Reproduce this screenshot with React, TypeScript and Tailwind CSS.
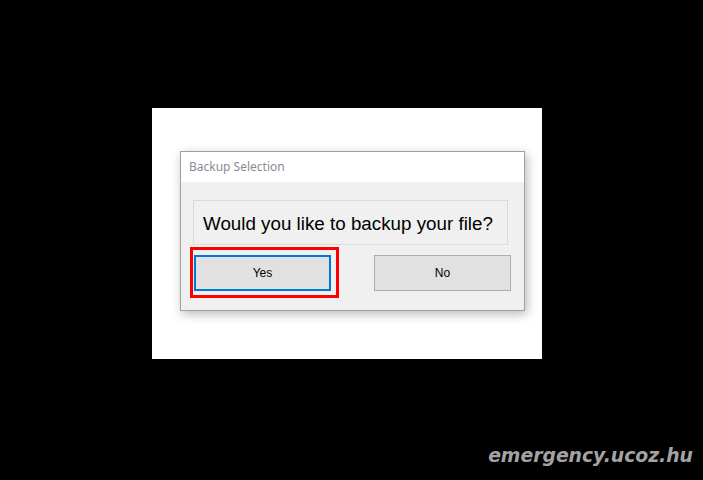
import React from 'react';

// Backup prompt dialog, captured over a white backdrop on black
export default function App() {
    return (
        <div className="w-[703px] h-[480px] bg-black flex flex-col overflow-hidden">
            <div className="ml-[152px] mt-[108px] w-[390px] h-[251px] bg-white pt-[43px] pl-[28px]">
                <div className="relative w-[345px] h-[160px] border border-[#a0a0a0] bg-[#f0f0f0] shadow-[2px_3px_10px_rgba(0,0,0,0.28)] flex flex-col">
                    <div className="h-[30px] bg-white flex items-center pl-[8px] text-[12px] text-[#8c8a94] font-['Noto_Sans',sans-serif]">
                        Backup Selection
                    </div>
                    <div className="flex flex-col pl-[12px] pt-[18px]">
                        <div className="w-[315px] h-[45px] border border-[#dadada] flex items-center pl-[9px] pt-[4px] whitespace-nowrap text-[18.8px] text-black font-['Liberation_Sans',Arial,sans-serif]">
                            Would you like to backup your file?
                        </div>
                        <div className="flex mt-[10px] ml-[1px] gap-[43px] text-[12px] text-black font-['Liberation_Sans',Arial,sans-serif]">
                            <div className="w-[137px] h-[36px] border-2 border-[#0078d7] bg-[#e1e1e1] flex items-center justify-center">Yes</div>
                            <div className="w-[137px] h-[36px] border border-[#adadad] bg-[#e1e1e1] flex items-center justify-center">No</div>
                        </div>
                    </div>
                    {/* red highlight annotation */}
                    <div className="absolute left-[9px] top-[95px] w-[149px] h-[51px] border-[3px] border-[#ff0000]" />
                </div>
            </div>
            <div className="mt-auto mb-[10px] self-end mr-[10px] text-[18.8px] font-bold italic text-[#a3a3a3] font-['DejaVu_Sans',sans-serif]">
                emergency.ucoz.hu
            </div>
        </div>
    );
}
